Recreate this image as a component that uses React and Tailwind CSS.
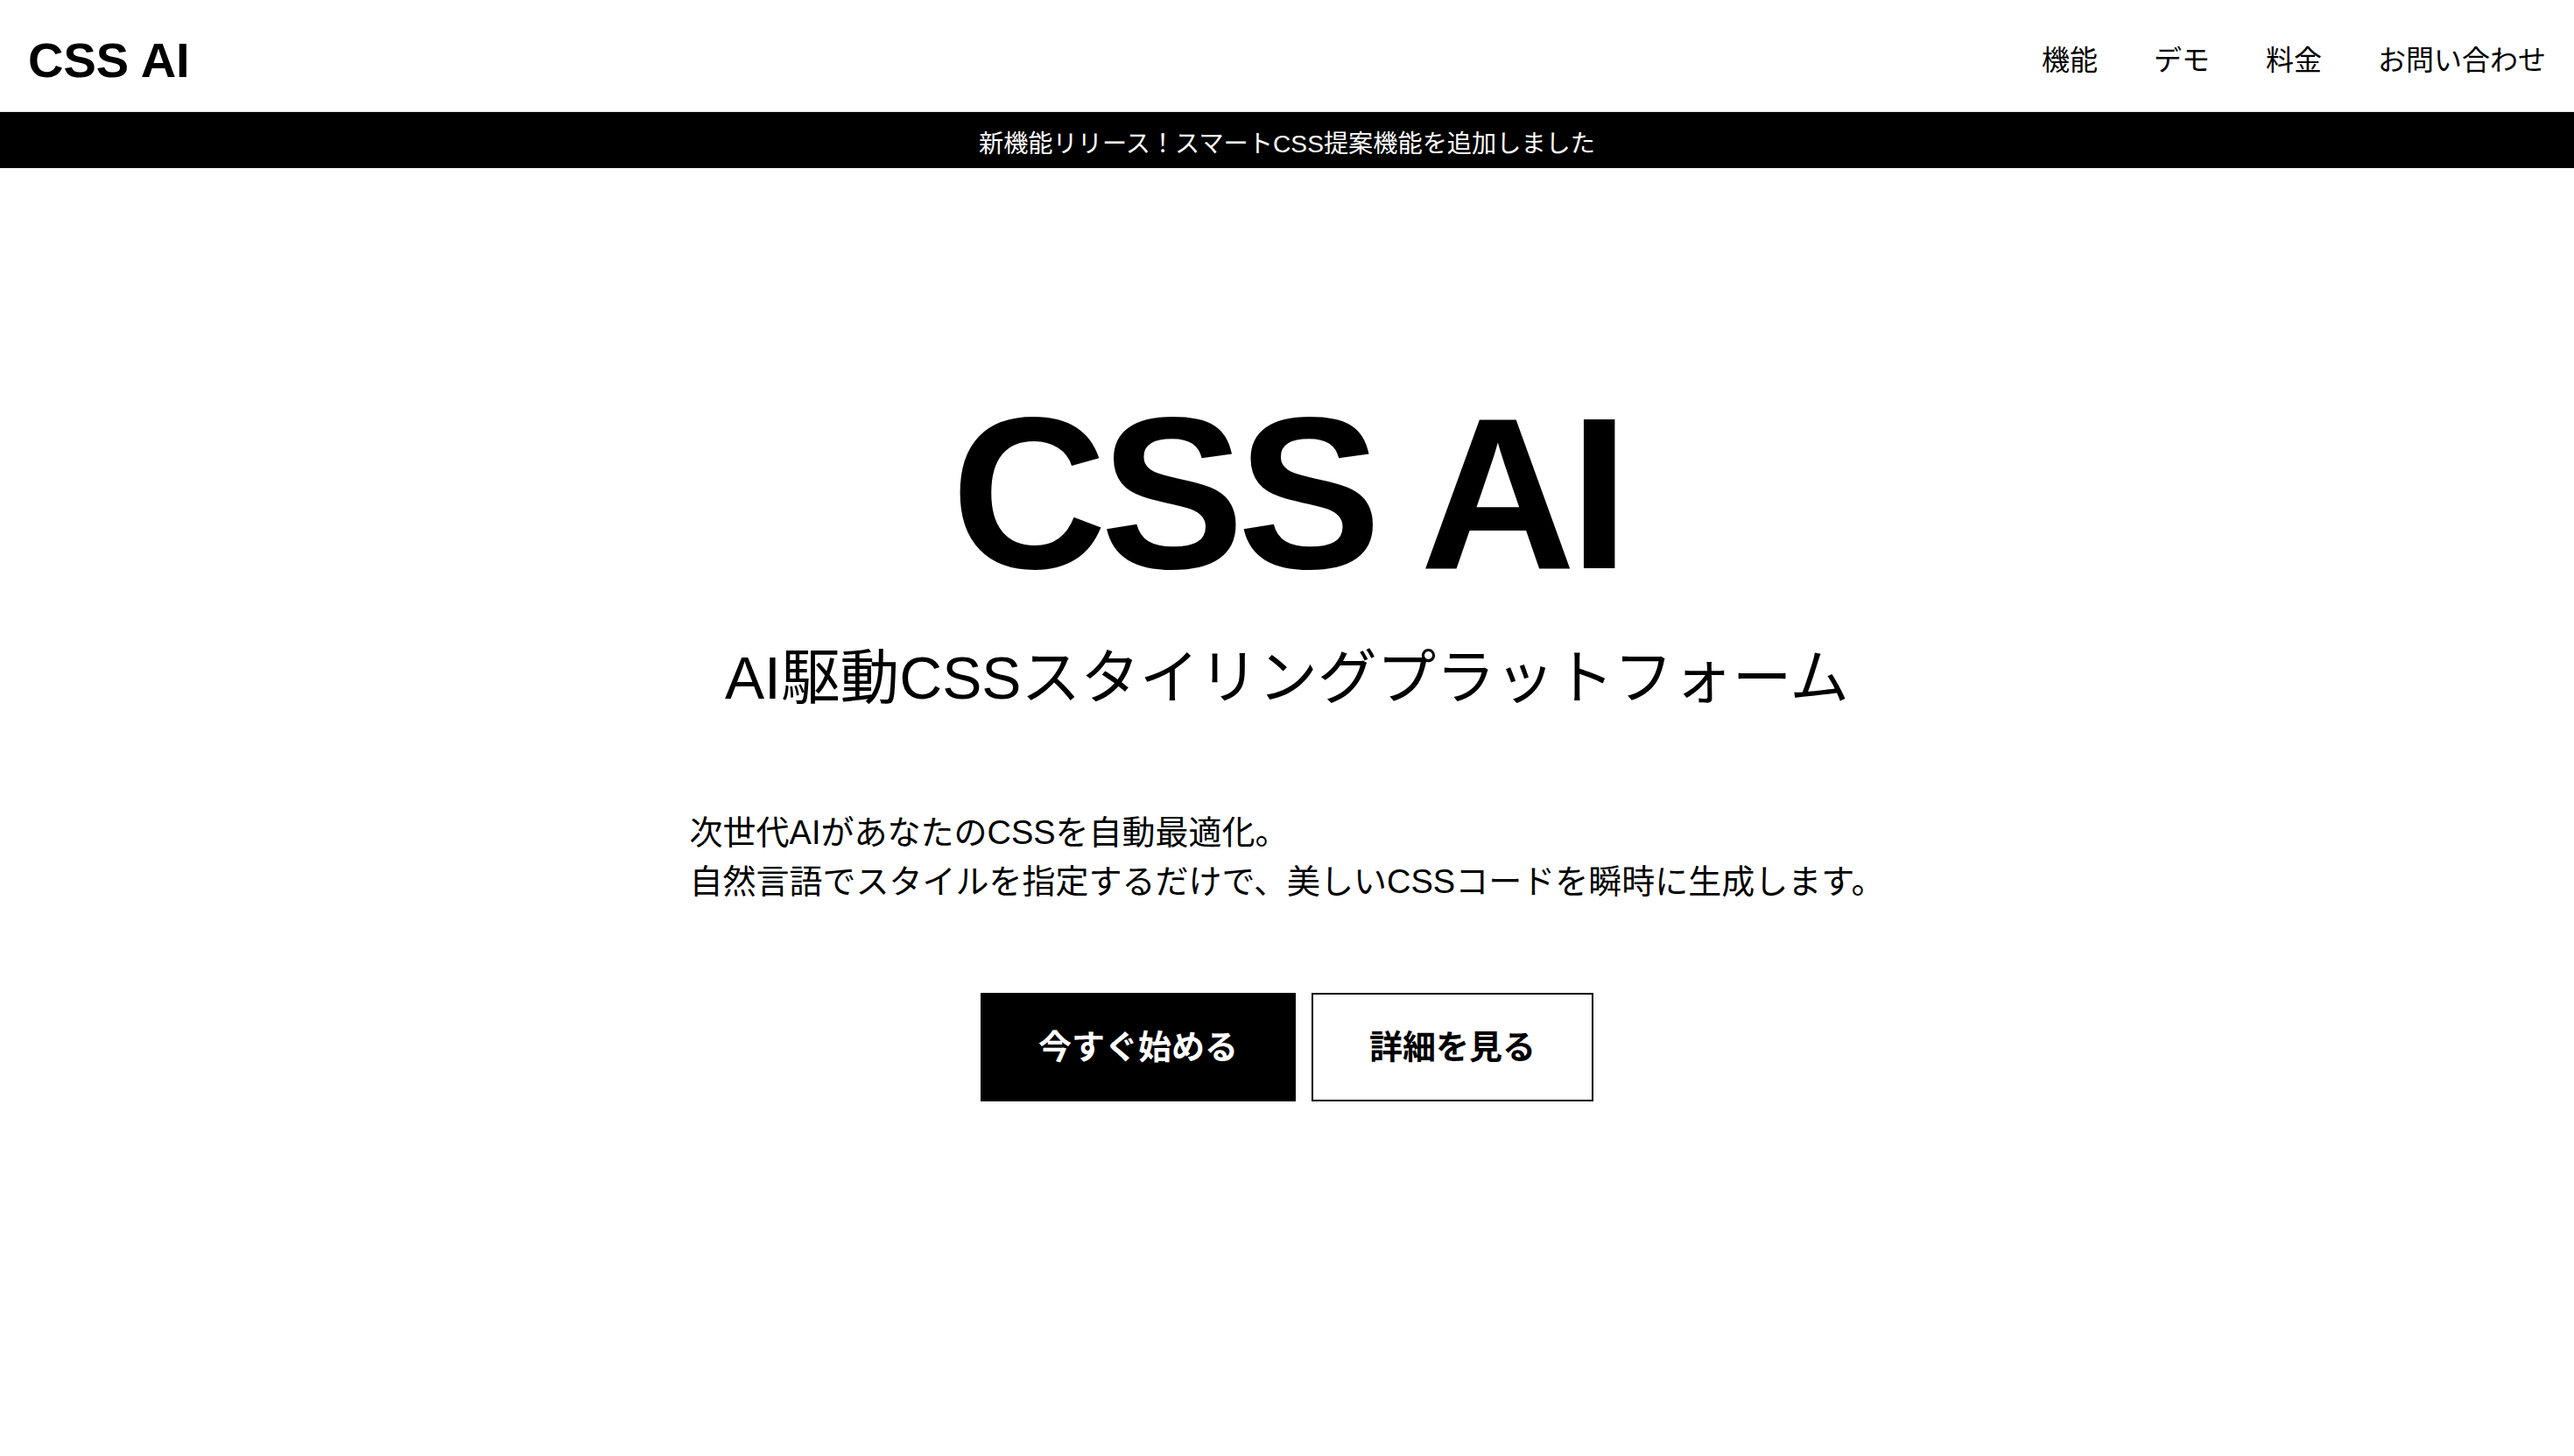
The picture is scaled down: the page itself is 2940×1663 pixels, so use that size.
export default function App() {
  return (
    <div className="min-h-screen bg-white text-black font-['Liberation_Sans','Noto_Sans_CJK_JP',sans-serif]">
      <header className="h-[128px] border-b border-[#e5e5e5] flex items-center justify-between px-[32px] pt-[10px]">
        <div className="text-[56px] font-bold leading-none">CSS AI</div>
        <nav className="flex gap-[64px] text-[32px] leading-[48px]">
          <a>機能</a>
          <a>デモ</a>
          <a>料金</a>
          <a>お問い合わせ</a>
        </nav>
      </header>
      <div className="h-[64px] bg-black text-white text-[28.2px] leading-[40px] flex items-center justify-center pt-[8px]">
        新機能リリース！スマートCSS提案機能を追加しました
      </div>
      <main className="flex flex-col items-center pt-[249px]">
        <h1 className="text-[246px] font-bold leading-none tracking-[-0.03em]">CSS AI</h1>
        <p className="mt-[45px] text-[67.7px] leading-[85px]">AI駆動CSSスタイリングプラットフォーム</p>
        <p className="mt-[106px] text-[38px] leading-[56px] text-left">
          次世代AIがあなたのCSSを自動最適化。
          <br />
          自然言語でスタイルを指定するだけで、美しいCSSコードを瞬時に生成します。
        </p>
        <div className="mt-[99px] flex gap-[18px]">
          <button className="bg-black text-white border-2 border-black px-[64px] py-[32px] text-[38px] leading-[56px] font-bold">
            今すぐ始める
          </button>
          <button className="bg-white text-black border-2 border-black px-[64px] py-[32px] text-[38px] leading-[56px] font-bold">
            詳細を見る
          </button>
        </div>
      </main>
    </div>
  );
}
